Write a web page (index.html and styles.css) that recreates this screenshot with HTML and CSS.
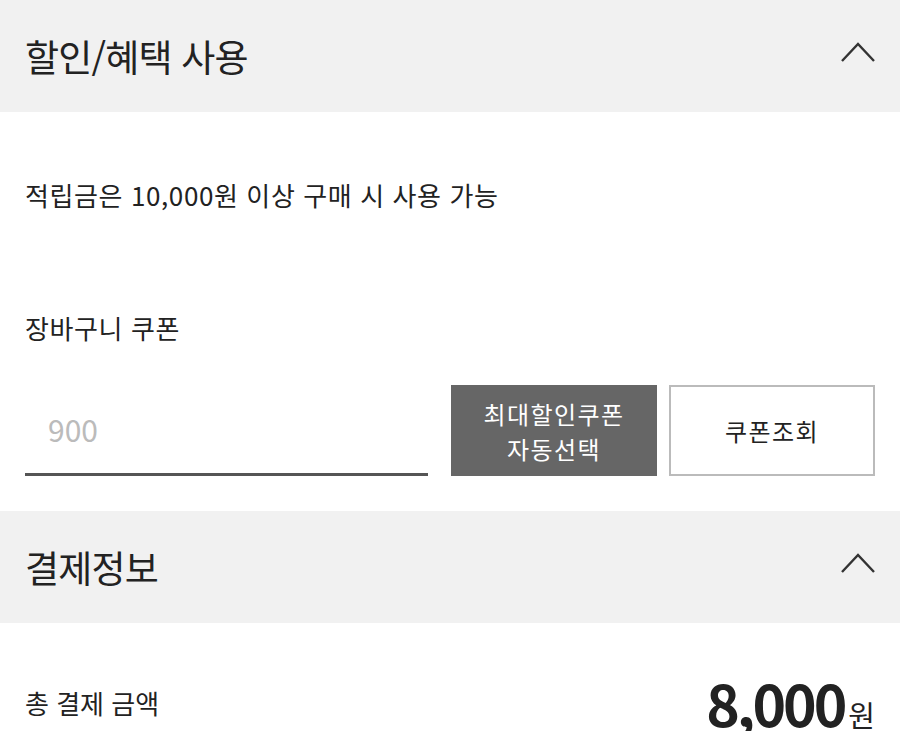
FILE: index.html
```html
<!DOCTYPE html>
<html lang="ko">
<head>
  <meta charset="UTF-8">
  <title>할인/혜택 사용</title>
  <meta name="viewport" content="width=device-width, initial-scale=1.0">
  <link rel="stylesheet" href="styles.css">
</head>
<body>
  <div class="section-head">
    <h2>할인/혜택 사용</h2>
    <svg class="chevron" width="36" height="24" viewBox="0 0 36 24">
      <polyline points="2,20 18,3 34,20" fill="none" stroke="#333" stroke-width="2.4"/>
    </svg>
  </div>

  <div class="benefit-body">
    <p class="notice">적립금은 10,000원 이상 구매 시 사용 가능</p>
    <p class="label">장바구니 쿠폰</p>
    <div class="coupon-row">
      <input type="text" class="coupon-input" placeholder="900">
      <button class="btn-dark">최대할인쿠폰<br>자동선택</button>
      <button class="btn-line">쿠폰조회</button>
    </div>
  </div>

  <div class="section-head">
    <h2>결제정보</h2>
    <svg class="chevron" width="36" height="24" viewBox="0 0 36 24">
      <polyline points="2,20 18,3 34,20" fill="none" stroke="#333" stroke-width="2.4"/>
    </svg>
  </div>

  <div class="total-row">
    <span class="total-label">총 결제 금액</span>
    <span class="total-price"><b>8,000</b><span class="won">원</span></span>
  </div>
</body>
</html>
```

FILE: styles.css
```css
body {
  margin: 0;
  font-family: "Noto Sans CJK KR", "Noto Sans", sans-serif;
  color: #222;
  background: #fff;
}
p { margin: 0; }

.section-head {
  height: 112px;
  background: #f1f1f1;
  display: flex;
  align-items: center;
  justify-content: space-between;
  padding: 0 25px;
}
.section-head h2 {
  margin: 0;
  font-size: 37px;
  font-weight: 400;
  letter-spacing: -0.8px;
  line-height: 1;
}
.chevron {
  margin-right: -1px;
  margin-top: -6px;
}

.benefit-body {
  padding: 64px 25px 35px;
}
.notice, .label {
  font-size: 26px;
  line-height: 38px;
  letter-spacing: 0.6px;
}
.label {
  margin-top: 95px;
}
.coupon-row {
  display: flex;
  margin-top: 38px;
  height: 91px;
}
.coupon-input {
  width: 403px;
  box-sizing: border-box;
  border: none;
  border-bottom: 3px solid #555;
  padding: 0 0 0 23px;
  font-family: inherit;
  font-size: 30px;
  outline: none;
  background: none;
}
.coupon-input::placeholder {
  color: #bbb;
}
.coupon-row button {
  width: 206px;
  box-sizing: border-box;
  font-family: inherit;
  font-size: 24px;
  line-height: 35px;
  letter-spacing: 1.4px;
  cursor: pointer;
}
.btn-dark {
  margin-left: 23px;
  background: #666;
  color: #fff;
  border: none;
}
.btn-line {
  margin-left: 12px;
  background: #fff;
  color: #222;
  border: 2px solid #bbb;
}

.total-row {
  display: flex;
  align-items: center;
  justify-content: space-between;
  padding: 51px 25px 0;
  line-height: 1;
}
.total-label {
  font-size: 26px;
  letter-spacing: 0;
}
.total-price b {
  font-size: 57px;
  font-weight: 700;
  letter-spacing: -3px;
}
.won {
  font-size: 29px;
  margin-left: 4px;
}
```
